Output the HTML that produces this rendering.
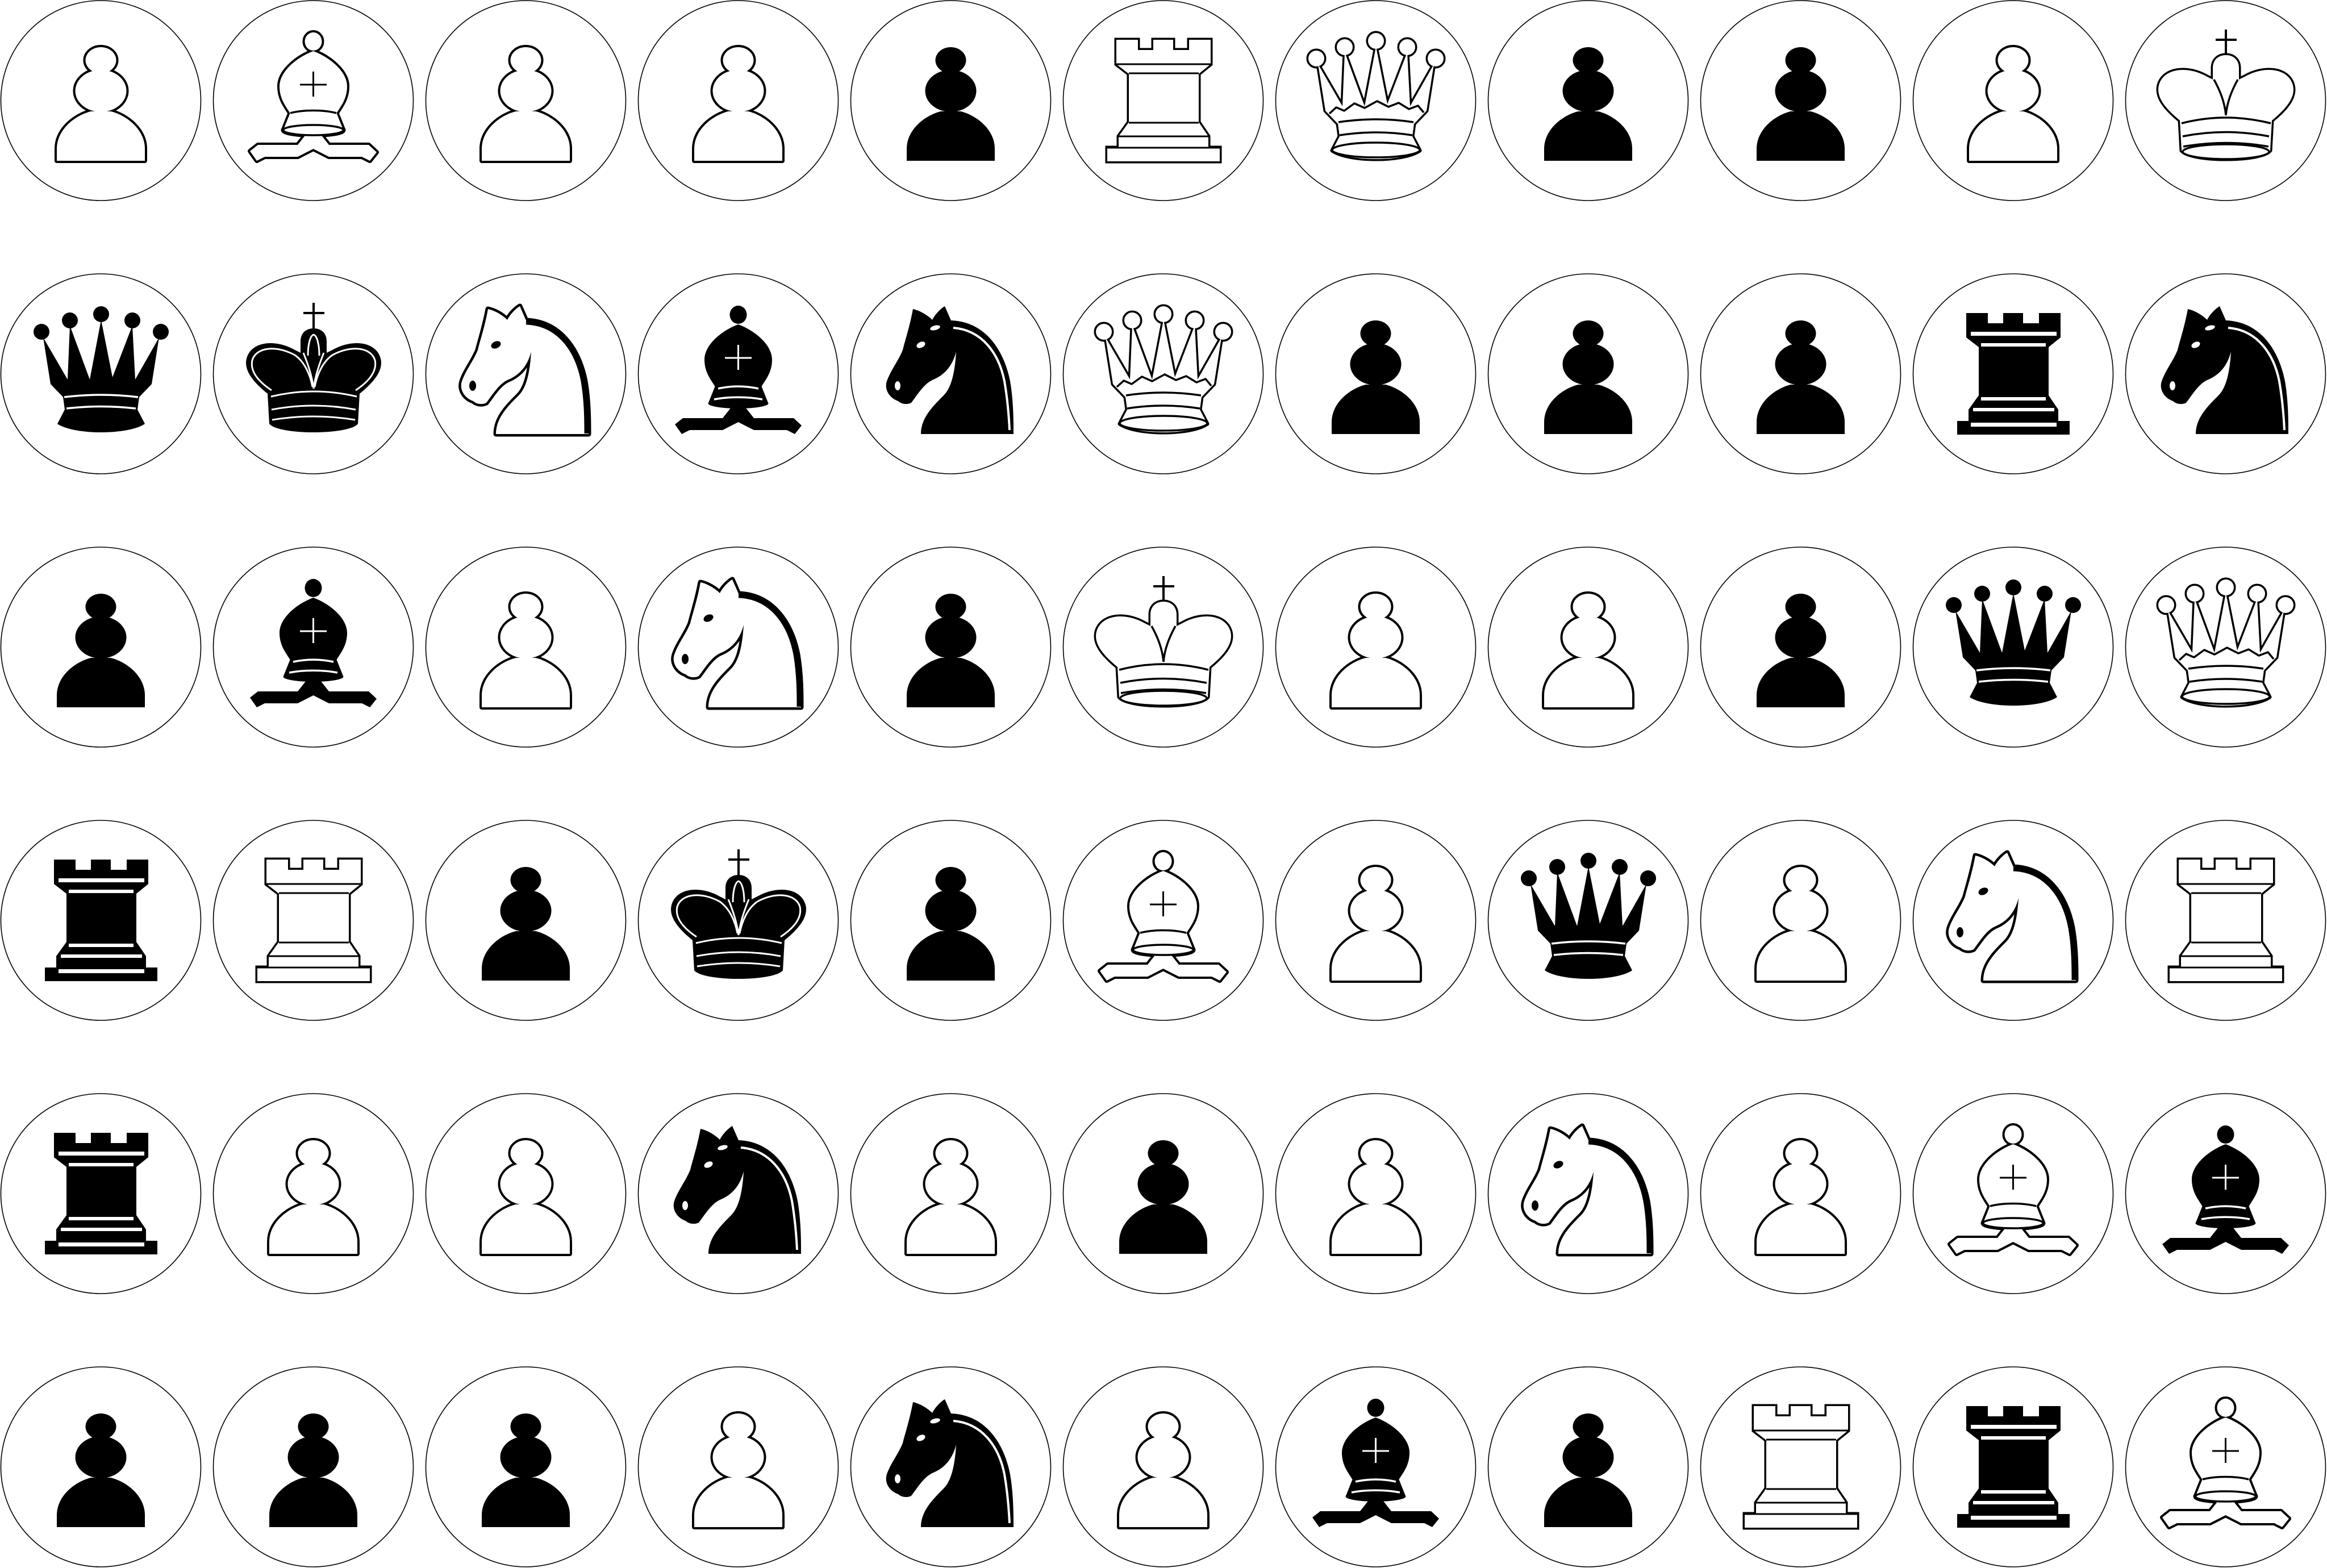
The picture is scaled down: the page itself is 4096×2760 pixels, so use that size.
<!DOCTYPE html>
<html><head><meta charset="utf-8"><style>
html,body{margin:0;padding:0;background:#fff;}
svg{display:block;}
</style></head><body>
<svg width="4096" height="2760" viewBox="0 0 4096 2760" xmlns="http://www.w3.org/2000/svg" xmlns:xlink="http://www.w3.org/1999/xlink">
<defs>
<g id="Ps"><ellipse cx="177.5" cy="106" rx="27" ry="23"/><ellipse cx="177.5" cy="160" rx="45" ry="37"/><path d="M100,283 L100,262 C100,228 132,203 160,196 L195,196 C223,203 255,228 255,262 L255,283 Z"/></g>
<g id="wP"><use href="#Ps" fill="#000" stroke="#000" stroke-width="8" stroke-linejoin="round"/><use href="#Ps" fill="#fff"/></g>
<g id="bP"><use href="#Ps" fill="#000"/></g>
<g id="Bs"><ellipse cx="177.5" cy="73" rx="15" ry="16"/><path d="M177.5,90 C150,100 118,125 118,152 C118,175 130,188 137,200 L218,200 C225,188 237,175 237,152 C237,125 205,100 177.5,90 Z"/><path d="M137,198 C160,193 195,193 218,198 L230,228 L125,228 Z"/><ellipse cx="177.5" cy="229" rx="53" ry="9"/><path d="M165,236 L150,255 L80,255 L66,266 L78,283 L92,276 L150,276 L177.5,262 L205,276 L263,276 L277,283 L289,268 L275,255 L205,255 L190,236 Z"/></g>
<g id="wB"><use href="#Bs" fill="#000" stroke="#000" stroke-width="8" stroke-linejoin="round"/><use href="#Bs" fill="#fff"/>
<g fill="none" stroke="#000" stroke-width="3.5"><path d="M137,199 C160,193 195,193 218,199"/><ellipse cx="177.5" cy="229" rx="53" ry="9"/><path d="M177.5,126 V170 M154,149 H201" stroke-width="3"/></g></g>
<g id="bB"><use href="#Bs" fill="#000"/>
<g fill="none" stroke="#fff" stroke-width="3.5"><path d="M177.5,126 V170 M154,149 H201" stroke-width="3"/><path d="M142,203 C165,198 190,198 213,203"/><path d="M135,222 C160,217 195,217 220,222"/></g></g>
<path id="Rs" d="M95,70 H133 V88 H160 V70 H195 V88 H223 V70 H261 V113 L240,130 V215 L257,240 V260 H277 V284 H79 V260 H99 V240 L117,215 V130 L95,113 Z"/>
<g id="wR"><use href="#Rs" fill="#000" stroke="#000" stroke-width="7" stroke-linejoin="miter"/><use href="#Rs" fill="#fff"/>
<path d="M95,113 H261 M117,129 H240 M117,216 H240 M99,240 H257 M79,260 H277" stroke="#000" stroke-width="3" fill="none"/></g>
<g id="bR"><use href="#Rs" fill="#000"/><g fill="#fff"><rect x="103" y="103" width="151" height="7"/><rect x="121" y="123" width="114" height="6"/><rect x="121" y="218" width="114" height="6"/><rect x="107" y="237" width="143" height="6"/><rect x="103" y="263" width="151" height="7"/></g></g>
<g id="Qs"><path d="M76,113 L89,195 L111,218 L114,240 L101,265 C130,285 226,285 255,265 L242,240 L245,218 L267,195 L280,113 L238,187 L233,92 L198,183 L178,82 L158,187 L123,92 L119,187 Z"/><circle cx="73" cy="103" r="14"/><circle cx="123" cy="83" r="14"/><circle cx="178" cy="72" r="14"/><circle cx="233" cy="83" r="14"/><circle cx="283" cy="103" r="14"/></g>
<g id="wQ"><use href="#Qs" fill="#000" stroke="#000" stroke-width="7" stroke-linejoin="round"/><use href="#Qs" fill="#fff"/>
<g fill="none" stroke="#000" stroke-width="3.5" stroke-linejoin="round"><path d="M96,200 L108,189 L122,195 L140,182 L158,190 L180,178 L200,188 L218,181 L236,192 L252,186 L262,198"/><path d="M112,215 Q178,205 244,215"/><path d="M114,238 Q178,228 242,238"/><ellipse cx="178" cy="264" rx="77" ry="13"/></g></g>
<g id="bQ"><use href="#Qs" fill="#000"/><g fill="none" stroke="#fff" stroke-width="3.5"><path d="M113,218 Q178,210 243,218"/><path d="M117,238 Q178,231 239,238"/></g></g>
<path id="Ks" d="M97,212 C70,190 55,170 60,150 C68,120 110,115 145,135 L155,140 L155,120 C155,105 165,97 178,97 C191,97 201,105 201,120 L201,140 L211,135 C246,115 288,120 296,150 C301,170 286,190 259,212 L256,265 C240,285 116,285 100,265 Z"/>
<g id="wK"><use href="#Ks" fill="#000" stroke="#000" stroke-width="7" stroke-linejoin="round"/><use href="#Ks" fill="#fff"/>
<g fill="none" stroke="#000" stroke-width="3.5"><path d="M178,52 V97 M160,70 H197" stroke-width="4"/><path d="M157,140 C168,160 176,180 178,203 M199,140 C188,160 180,180 178,203"/><path d="M100,217 Q178,197 257,217"/><path d="M102,240 Q178,225 254,240"/><path d="M103,258 Q178,245 253,258"/><ellipse cx="178" cy="267" rx="76" ry="13"/></g></g>
<g id="bK"><use href="#Ks" fill="#000"/><path d="M178,52 V97 M160,70 H197" stroke="#000" stroke-width="4"/>
<g fill="none" stroke="#fff" stroke-width="3"><path d="M160,140 C168,160 175,180 178,203 M196,140 C188,160 181,180 178,203"/><path d="M104,206 C80,190 66,172 70,153 C77,130 112,126 145,144 C162,156 172,178 176,200"/><path d="M252,206 C276,190 290,172 286,153 C279,130 244,126 211,144 C194,156 184,178 180,200"/><path d="M168,145 C168,125 172,110 178,108 C184,110 188,125 188,145"/><path d="M103,217 Q178,199 254,217"/><path d="M104,240 Q178,226 252,240"/><path d="M105,258 Q178,246 251,258"/></g></g>
<path id="Ns" d="M111,63 C125,66 138,75 145,82 C150,72 160,62 167,58 L178,83 C235,85 270,130 282,190 C288,225 288,260 288,283 L125,283 C125,255 145,235 165,215 C180,200 185,170 187,138 C180,165 165,180 145,188 C130,195 118,215 108,228 C100,232 90,230 85,225 C70,220 60,205 65,190 C72,170 85,155 93,135 C98,115 105,95 111,63 Z"/>
<g id="wN"><use href="#Ns" fill="#000" stroke="#000" stroke-width="9" stroke-linejoin="round"/><use href="#Ns" fill="#fff"/>
<path d="M178,86 C234,88 268,132 279,190 C285,225 285,260 285,282" fill="none" stroke="#000" stroke-width="9"/>
<ellipse cx="125" cy="126" rx="9" ry="6" fill="#000" transform="rotate(-25 125 126)"/><ellipse cx="84" cy="198" rx="6" ry="9" fill="#000"/></g>
<g id="bN"><use href="#Ns" fill="#000"/>
<path d="M182,96 C232,100 262,140 272,190 C278,225 280,255 281,276" fill="none" stroke="#fff" stroke-width="4"/>
<ellipse cx="125" cy="126" rx="8" ry="5" fill="#fff" transform="rotate(-25 125 126)"/><ellipse cx="84" cy="198" rx="5" ry="8" fill="#fff"/><ellipse cx="150" cy="96" rx="9" ry="4" fill="#fff" transform="rotate(-15 150 96)"/></g>
<circle id="C" cx="177.5" cy="177" r="176" fill="#fff" stroke="#000" stroke-width="1.6"/>
</defs>

<g transform="translate(0,0)"><use href="#C"/><use href="#wP"/></g>
<g transform="translate(374,0)"><use href="#C"/><use href="#wB"/></g>
<g transform="translate(748,0)"><use href="#C"/><use href="#wP"/></g>
<g transform="translate(1122,0)"><use href="#C"/><use href="#wP"/></g>
<g transform="translate(1496,0)"><use href="#C"/><use href="#bP"/></g>
<g transform="translate(1870,0)"><use href="#C"/><use href="#wR"/></g>
<g transform="translate(2244,0)"><use href="#C"/><use href="#wQ"/></g>
<g transform="translate(2618,0)"><use href="#C"/><use href="#bP"/></g>
<g transform="translate(2992,0)"><use href="#C"/><use href="#bP"/></g>
<g transform="translate(3366,0)"><use href="#C"/><use href="#wP"/></g>
<g transform="translate(3740,0)"><use href="#C"/><use href="#wK"/></g>
<g transform="translate(0,481)"><use href="#C"/><use href="#bQ"/></g>
<g transform="translate(374,481)"><use href="#C"/><use href="#bK"/></g>
<g transform="translate(748,481)"><use href="#C"/><use href="#wN"/></g>
<g transform="translate(1122,481)"><use href="#C"/><use href="#bB"/></g>
<g transform="translate(1496,481)"><use href="#C"/><use href="#bN"/></g>
<g transform="translate(1870,481)"><use href="#C"/><use href="#wQ"/></g>
<g transform="translate(2244,481)"><use href="#C"/><use href="#bP"/></g>
<g transform="translate(2618,481)"><use href="#C"/><use href="#bP"/></g>
<g transform="translate(2992,481)"><use href="#C"/><use href="#bP"/></g>
<g transform="translate(3366,481)"><use href="#C"/><use href="#bR"/></g>
<g transform="translate(3740,481)"><use href="#C"/><use href="#bN"/></g>
<g transform="translate(0,962)"><use href="#C"/><use href="#bP"/></g>
<g transform="translate(374,962)"><use href="#C"/><use href="#bB"/></g>
<g transform="translate(748,962)"><use href="#C"/><use href="#wP"/></g>
<g transform="translate(1122,962)"><use href="#C"/><use href="#wN"/></g>
<g transform="translate(1496,962)"><use href="#C"/><use href="#bP"/></g>
<g transform="translate(1870,962)"><use href="#C"/><use href="#wK"/></g>
<g transform="translate(2244,962)"><use href="#C"/><use href="#wP"/></g>
<g transform="translate(2618,962)"><use href="#C"/><use href="#wP"/></g>
<g transform="translate(2992,962)"><use href="#C"/><use href="#bP"/></g>
<g transform="translate(3366,962)"><use href="#C"/><use href="#bQ"/></g>
<g transform="translate(3740,962)"><use href="#C"/><use href="#wQ"/></g>
<g transform="translate(0,1443)"><use href="#C"/><use href="#bR"/></g>
<g transform="translate(374,1443)"><use href="#C"/><use href="#wR"/></g>
<g transform="translate(748,1443)"><use href="#C"/><use href="#bP"/></g>
<g transform="translate(1122,1443)"><use href="#C"/><use href="#bK"/></g>
<g transform="translate(1496,1443)"><use href="#C"/><use href="#bP"/></g>
<g transform="translate(1870,1443)"><use href="#C"/><use href="#wB"/></g>
<g transform="translate(2244,1443)"><use href="#C"/><use href="#wP"/></g>
<g transform="translate(2618,1443)"><use href="#C"/><use href="#bQ"/></g>
<g transform="translate(2992,1443)"><use href="#C"/><use href="#wP"/></g>
<g transform="translate(3366,1443)"><use href="#C"/><use href="#wN"/></g>
<g transform="translate(3740,1443)"><use href="#C"/><use href="#wR"/></g>
<g transform="translate(0,1924)"><use href="#C"/><use href="#bR"/></g>
<g transform="translate(374,1924)"><use href="#C"/><use href="#wP"/></g>
<g transform="translate(748,1924)"><use href="#C"/><use href="#wP"/></g>
<g transform="translate(1122,1924)"><use href="#C"/><use href="#bN"/></g>
<g transform="translate(1496,1924)"><use href="#C"/><use href="#wP"/></g>
<g transform="translate(1870,1924)"><use href="#C"/><use href="#bP"/></g>
<g transform="translate(2244,1924)"><use href="#C"/><use href="#wP"/></g>
<g transform="translate(2618,1924)"><use href="#C"/><use href="#wN"/></g>
<g transform="translate(2992,1924)"><use href="#C"/><use href="#wP"/></g>
<g transform="translate(3366,1924)"><use href="#C"/><use href="#wB"/></g>
<g transform="translate(3740,1924)"><use href="#C"/><use href="#bB"/></g>
<g transform="translate(0,2405)"><use href="#C"/><use href="#bP"/></g>
<g transform="translate(374,2405)"><use href="#C"/><use href="#bP"/></g>
<g transform="translate(748,2405)"><use href="#C"/><use href="#bP"/></g>
<g transform="translate(1122,2405)"><use href="#C"/><use href="#wP"/></g>
<g transform="translate(1496,2405)"><use href="#C"/><use href="#bN"/></g>
<g transform="translate(1870,2405)"><use href="#C"/><use href="#wP"/></g>
<g transform="translate(2244,2405)"><use href="#C"/><use href="#bB"/></g>
<g transform="translate(2618,2405)"><use href="#C"/><use href="#bP"/></g>
<g transform="translate(2992,2405)"><use href="#C"/><use href="#wR"/></g>
<g transform="translate(3366,2405)"><use href="#C"/><use href="#bR"/></g>
<g transform="translate(3740,2405)"><use href="#C"/><use href="#wB"/></g>
</svg>
</body></html>
